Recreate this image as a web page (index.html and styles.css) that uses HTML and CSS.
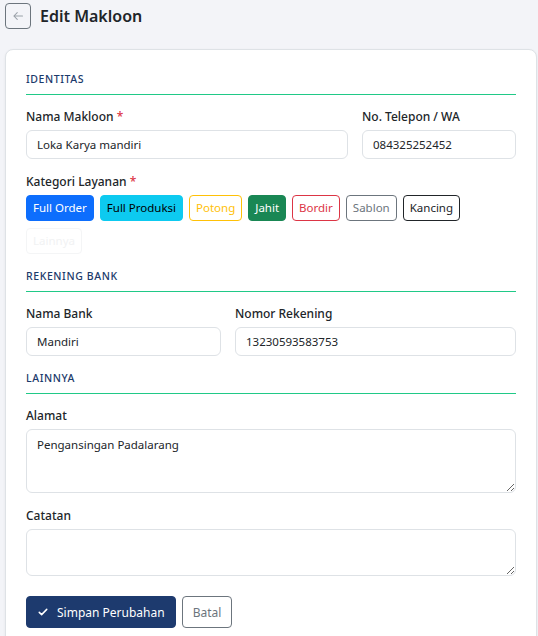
FILE: index.html
```html
<!DOCTYPE html>
<html lang="id">
<head>
  <meta charset="UTF-8" />
  <meta name="viewport" content="width=device-width, initial-scale=1.0"/>
  <title>Edit Makloon</title>
  <link rel="stylesheet" href="styles.css">
</head>
<body>
  <!-- Judul halaman -->
  <div class="page-head">
    <a href="#" class="btn-back" title="Kembali">
      <svg width="12" height="12" viewBox="0 0 16 16" fill="none" stroke="currentColor" stroke-width="1.4" stroke-linecap="round" stroke-linejoin="round">
        <path d="M14 8H2.5M7 3.5L2.5 8 7 12.5"/>
      </svg>
    </a>
    <h1>Edit Makloon</h1>
  </div>

  <form class="card" id="makloonForm">
    <!-- Identitas -->
    <div class="section-title">Identitas</div>

    <div class="row row-8-4">
      <div class="field">
        <label for="nama">Nama Makloon <span class="req">*</span></label>
        <input type="text" id="nama" value="Loka Karya mandiri">
      </div>
      <div class="field">
        <label for="telepon">No. Telepon / WA</label>
        <input type="text" id="telepon" value="084325252452">
      </div>
    </div>

    <div class="field">
      <label>Kategori Layanan <span class="req">*</span></label>
      <div class="chips">
        <button type="button" class="chip chip-primary">Full Order</button>
        <button type="button" class="chip chip-info">Full Produksi</button>
        <button type="button" class="chip chip-warning">Potong</button>
        <button type="button" class="chip chip-success">Jahit</button>
        <button type="button" class="chip chip-danger">Bordir</button>
        <button type="button" class="chip chip-secondary">Sablon</button>
        <button type="button" class="chip chip-dark">Kancing</button>
        <button type="button" class="chip chip-light">Lainnya</button>
      </div>
    </div>

    <!-- Rekening bank -->
    <div class="section-title">Rekening Bank</div>

    <div class="row row-5-7">
      <div class="field">
        <label for="bank">Nama Bank</label>
        <input type="text" id="bank" value="Mandiri">
      </div>
      <div class="field">
        <label for="rekening">Nomor Rekening</label>
        <input type="text" id="rekening" value="13230593583753">
      </div>
    </div>

    <!-- Lainnya -->
    <div class="section-title">Lainnya</div>

    <div class="field">
      <label for="alamat">Alamat</label>
      <textarea id="alamat" class="ta-alamat">Pengansingan Padalarang</textarea>
    </div>

    <div class="field">
      <label for="catatan">Catatan</label>
      <textarea id="catatan" class="ta-catatan"></textarea>
    </div>

    <div class="actions">
      <button type="submit" class="btn-save">
        <svg width="12" height="12" viewBox="0 0 16 16" fill="none" stroke="currentColor" stroke-width="2" stroke-linecap="round" stroke-linejoin="round">
          <path d="M3 8.5l3.2 3L13 4.5"/>
        </svg>
        Simpan Perubahan
      </button>
      <a href="#" class="btn-cancel">Batal</a>
    </div>
  </form>
</body>
</html>
```

FILE: styles.css
```css
body {
  font-family: "Noto Sans", "Open Sans", sans-serif;
  background-color: #f3f4f8;
  color: #212529;
  margin: 0;
  padding: 3px 1px 0 5px;
}

/* Header */
.page-head {
  display: flex;
  align-items: center;
  gap: 9px;
  margin-bottom: 20px;
}

.btn-back {
  width: 24px;
  height: 24px;
  display: flex;
  align-items: center;
  justify-content: center;
  border: 1px solid #6c757d;
  border-radius: 4px;
  color: #9aa1a8;
  text-decoration: none;
}

.page-head h1 {
  margin: 0;
  font-size: 16px;
  font-weight: 600;
  color: #212529;
}

/* Card */
.card {
  background-color: #fff;
  border: 1px solid #dee2e6;
  border-radius: 8px;
  box-shadow: 0 1px 3px rgba(0,0,0,0.06);
  padding: 21px 20px 40px;
  min-height: 600px;
}

.section-title {
  font-size: 10.5px;
  font-weight: 500;
  letter-spacing: 0.6px;
  text-transform: uppercase;
  color: #1b3a6b;
  line-height: 16px;
  padding-bottom: 7px;
  border-bottom: 1px solid #20c987;
  margin-bottom: 13px;
}

.row {
  display: grid;
  column-gap: 14px;
}

.row-8-4 {
  grid-template-columns: 322fr 154fr;
}

.row-5-7 {
  grid-template-columns: 195fr 281fr;
}

.field {
  margin-bottom: 14px;
}

label {
  display: block;
  font-size: 12px;
  font-weight: 500;
  line-height: 18px;
  margin-bottom: 4px;
  color: #212529;
}

.req {
  color: #dc3545;
}

input[type="text"],
textarea {
  display: block;
  width: 100%;
  box-sizing: border-box;
  font-family: inherit;
  font-size: 11.5px;
  color: #212529;
  border: 1px solid #dee2e6;
  border-radius: 6px;
  padding: 5px 10px;
  height: 29px;
  background: #fff;
}

textarea {
  resize: vertical;
  line-height: 17px;
  padding-top: 6px;
}

.ta-alamat {
  height: 64px;
}

.ta-catatan {
  height: 47px;
}

/* Chips kategori */
.chips {
  display: flex;
  flex-wrap: wrap;
  gap: 7px 6px;
}

.chip {
  font-family: inherit;
  font-size: 11.5px;
  line-height: 16px;
  padding: 4px 6px;
  border: 1px solid transparent;
  border-radius: 4px;
  background: transparent;
  cursor: pointer;
}

.chip-primary { background-color: #0d6efd; border-color: #0d6efd; color: #fff; }
.chip-info { background-color: #0dcaf0; border-color: #0dcaf0; color: #000; }
.chip-warning { border-color: #ffc107; color: #ffc107; }
.chip-success { background-color: #198754; border-color: #198754; color: #fff; }
.chip-danger { border-color: #dc3545; color: #dc3545; }
.chip-secondary { border-color: #6c757d; color: #6c757d; }
.chip-dark { border-color: #212529; color: #212529; }
.chip-light { border-color: #f4f5f6; color: #f1f2f3; }

/* Tombol aksi */
.actions {
  display: flex;
  gap: 6px;
  margin-top: 20px;
}

.btn-save {
  display: flex;
  align-items: center;
  gap: 8px;
  font-family: inherit;
  font-size: 12px;
  background-color: #1d3a6e;
  color: #fff;
  border: 1px solid #1d3a6e;
  border-radius: 4px;
  padding: 6px 10px;
  height: 32px;
  cursor: pointer;
}

.btn-cancel {
  display: flex;
  align-items: center;
  font-size: 12px;
  color: #6c757d;
  border: 1px solid #6c757d;
  border-radius: 4px;
  padding: 0 10px;
  height: 30px;
  text-decoration: none;
}
```
